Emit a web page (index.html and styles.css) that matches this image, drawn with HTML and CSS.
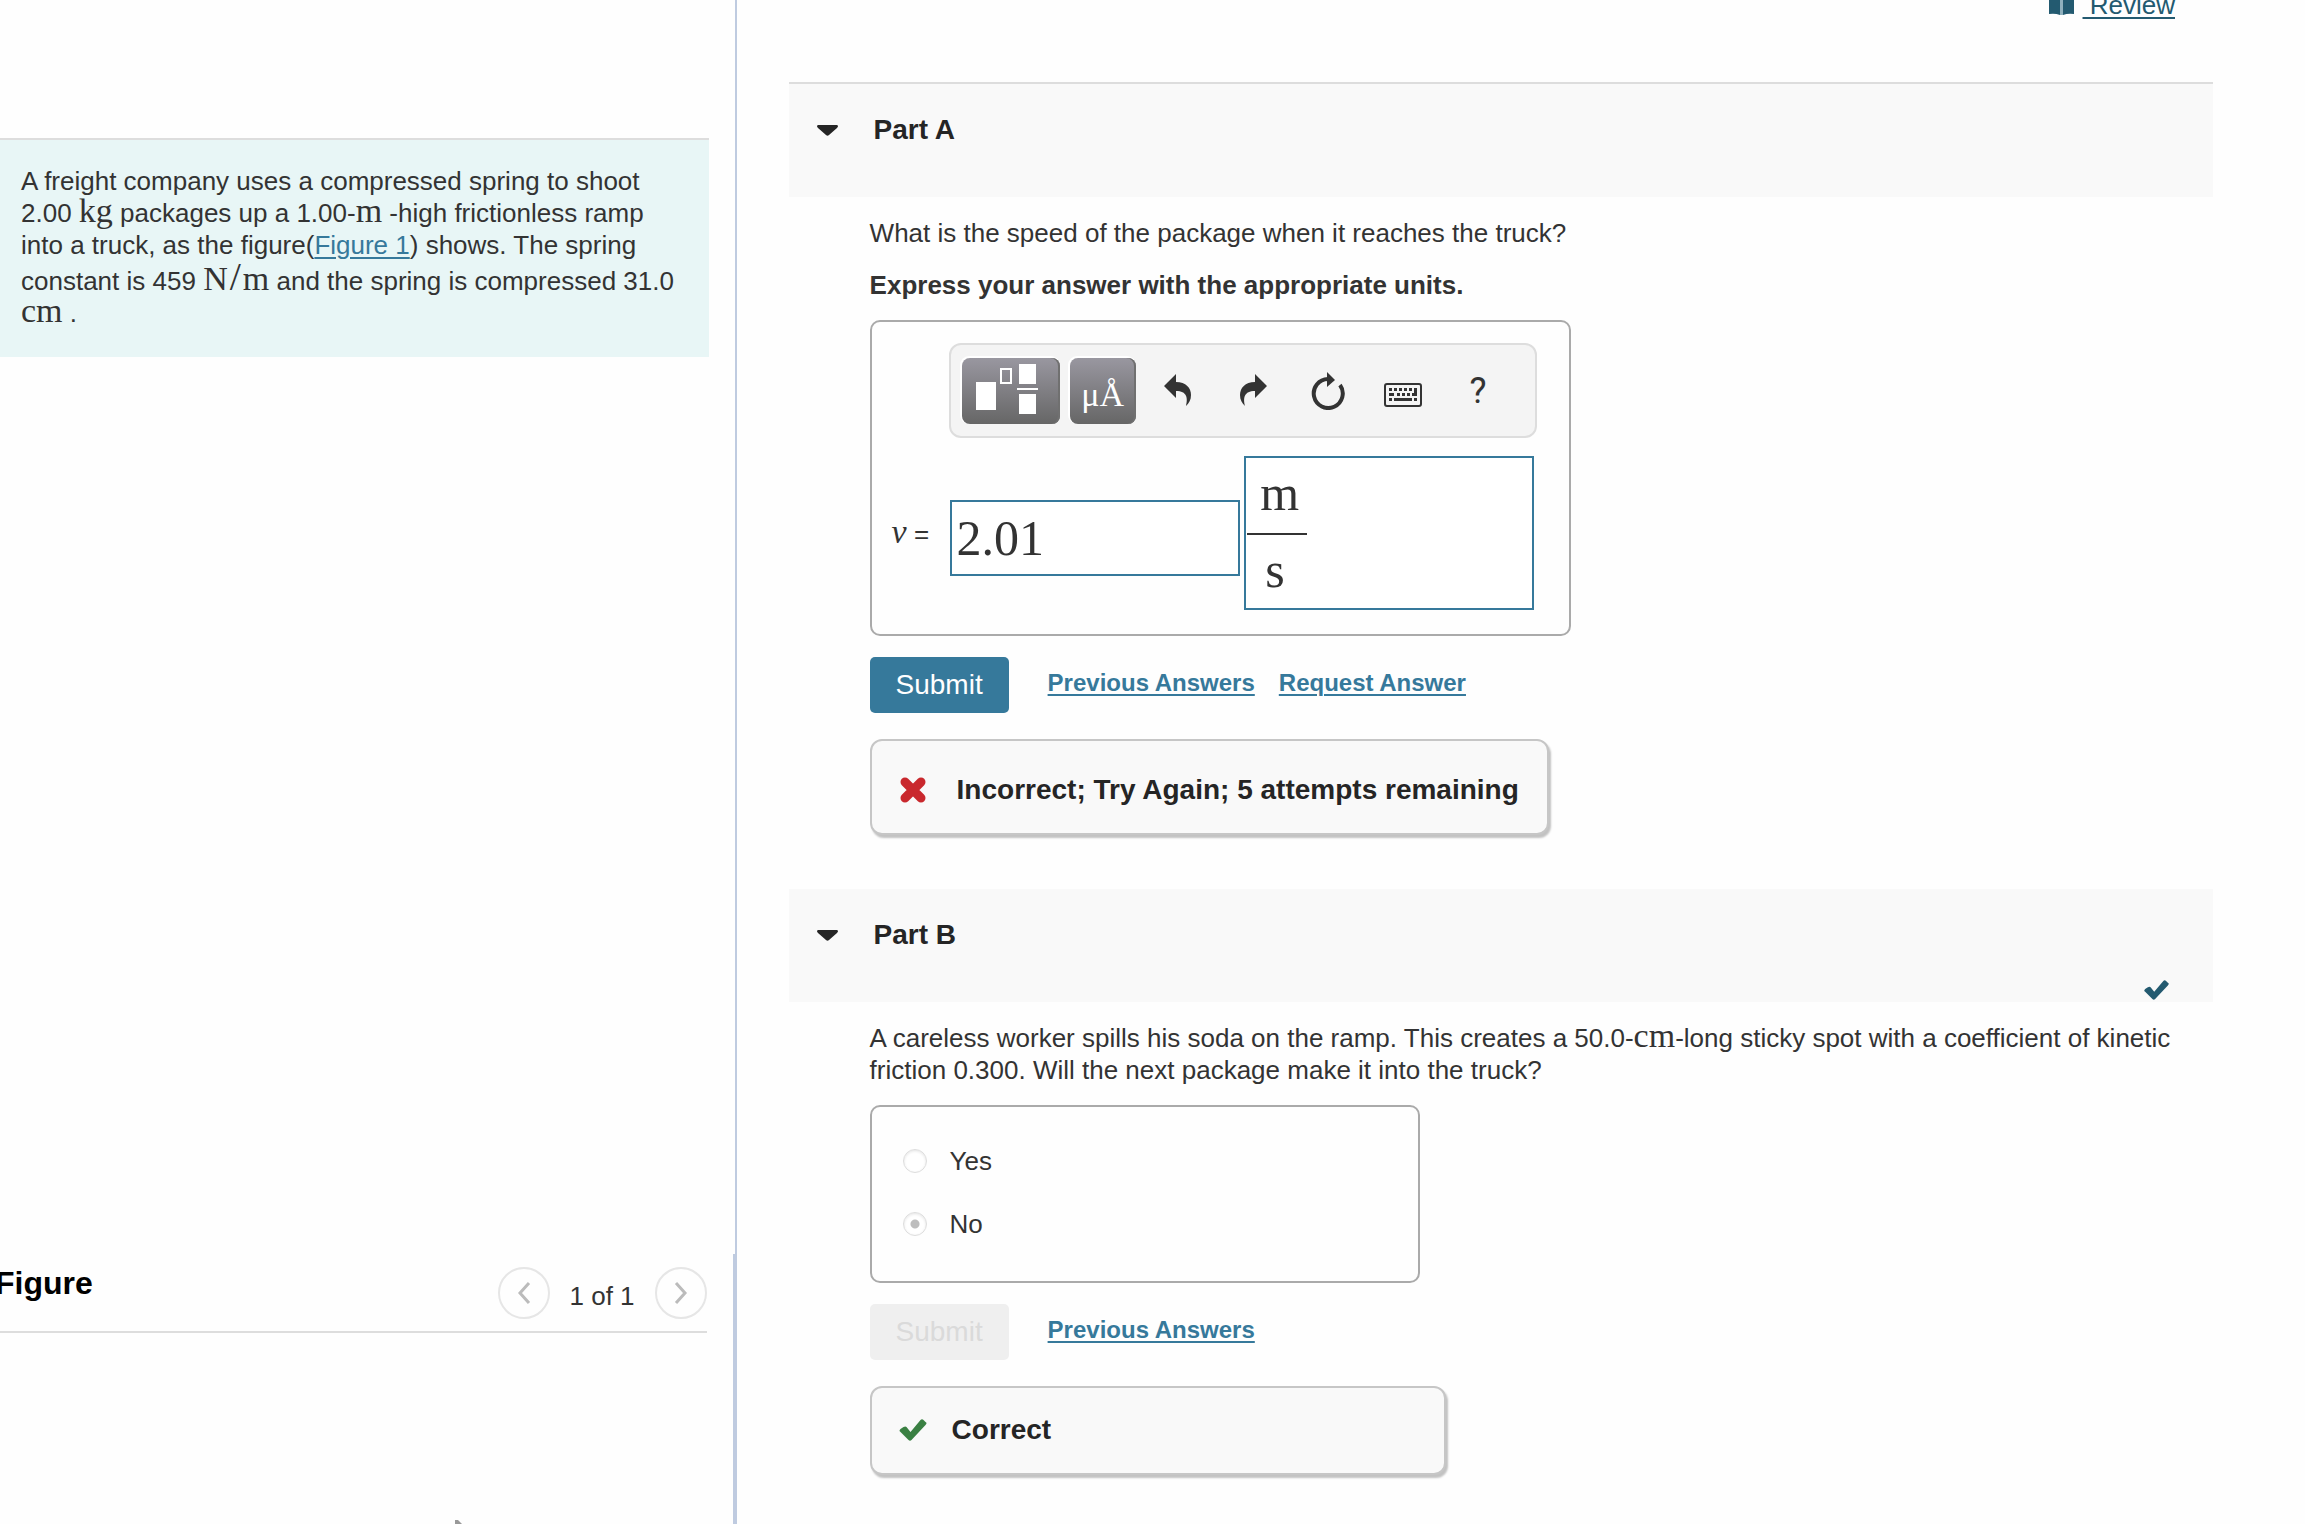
FILE: index.html
```html
<!DOCTYPE html>
<html lang="en">
<head>
<meta charset="utf-8">
<title>Spring and Ramp Problem</title>
<link rel="stylesheet" href="styles.css">
</head>
<body>
<div class="page">
  <aside class="side">
    <section class="side-top">
      <p class="problem">A freight company uses a compressed spring to shoot 2.00 <span class="math">kg</span> packages up a 1.00-<span class="math">m</span> -high frictionless ramp into a truck, as the figure(<a href="#figure">Figure 1</a>) shows. The spring constant is 459 <span class="math">N<span class="slash">/</span>m</span> and the spring is compressed 31.0 <span class="math">cm</span> .</p>
    </section>
    <section class="figure" id="figure">
      <header class="figure-head">
        <h2>Figure</h2>
        <div class="pager">
          <button type="button" class="round" aria-label="Previous figure"><svg width="16" height="24" viewBox="0 0 16 24"><path d="M13 2 4 12l9 10"/></svg></button>
          <span>1 of 1</span>
          <button type="button" class="round" aria-label="Next figure"><svg width="16" height="24" viewBox="0 0 16 24"><path d="M3 2l9 10-9 10"/></svg></button>
        </div>
      </header>
      <svg class="sketch" width="10" height="4" viewBox="0 0 10 4"><path d="M1 0h3l4 4H1z" fill="#999"/></svg>
    </section>
  </aside>

  <main class="work">
    <nav class="top">
      <svg width="25" height="22" viewBox="0 0 25 22"><path d="M0 0h11v22q-5-2-11-1zM14 0h11v21q-6-1-11 1z" fill="#235a70"/><path d="M11 0h3v22h-3z" fill="#8fb0bd"/></svg>
      <a href="#review">&nbsp;Review</a>
    </nav>

    <section class="part">
      <header class="part-head part-head-first">
        <svg width="21" height="11" viewBox="0 0 21 11"><path d="M1 0h19q2 1 0 3l-8 7q-1.500 1.500-3 0L1 3q-2-2 0-3z" fill="#252525"/></svg>
        <h2>Part A</h2>
      </header>
      <div class="part-body">
        <p>What is the speed of the package when it reaches the truck?</p>
        <p class="strong">Express your answer with the appropriate units.</p>
        <div class="answer">
          <div class="toolbar" role="toolbar" aria-label="Equation tools">
            <button type="button" class="tool tool-wide" aria-label="Templates"><svg width="98" height="66" viewBox="0 0 98 66"><g fill="#fff"><path d="M14 24h20v28H14zM57 6h17v20H57zM55 30h21v2H55zM57 36h17v20H57z"/></g><path d="M39 11h10v14H39z" fill="none" stroke="#fff" stroke-width="2"/></svg></button>
            <button type="button" class="tool">μÅ</button>
            <div class="tool-icons">
              <button type="button" aria-label="Undo"><svg width="28" height="33" viewBox="0 0 28 33"><path id="bent" d="M0 12 12 0v8c10 0 15 6 15 13 0 5-2 8-5 11 2-8 1-15-10-15v7z"/></svg></button>
              <button type="button" aria-label="Redo"><svg width="28" height="33" viewBox="0 0 28 33"><use href="#bent" transform="matrix(-1 0 0 1 28 0)"/></svg></button>
              <button type="button" aria-label="Reset"><svg width="34" height="38" viewBox="0 0 34 38"><path d="M17 7A14.500 14.500 0 1 0 29 13" fill="none" stroke="#333" stroke-width="4"/><path d="M16 0l8 8-8 7z"/></svg></button>
              <button type="button" class="low" aria-label="Keyboard"><svg width="38" height="24" viewBox="0 0 38 24"><rect x="1" y="1" width="36" height="22" rx="2" fill="none" stroke="#333" stroke-width="2"/><path d="M5 5h3v3H5zM10 5h3v3h-3zM15 5h3v3h-3zM20 5h3v3h-3zM25 5h3v3h-3zM30 5h3v8h-5v-3h2zM5 10h5v3H5zM13 10h3v3h-3zM18 10h3v3h-3zM23 10h3v3h-3zM5 15h3v3H5zM10 15h18v3H10zM30 15h3v3h-3z"/></svg></button>
              <button type="button" class="help" aria-label="Help">?</button>
            </div>
          </div>
          <div class="entry">
            <label for="value"><i>v</i> =</label>
            <input id="value" class="value" type="text" value="2.01">
            <div class="unit" contenteditable="true" role="textbox" aria-label="Units"><span class="frac"><span class="over">m</span><span class="under">s</span></span></div>
          </div>
        </div>
        <div class="actions">
          <button type="button" class="submit">Submit</button>
          <div class="links"><a href="#previous">Previous Answers</a><a href="#request">Request Answer</a></div>
        </div>
        <div class="feedback wrong">
          <svg width="28" height="28" viewBox="0 0 28 28"><path d="M6 6l16 16M22 6L6 22" stroke="#c9282d" stroke-width="9" stroke-linecap="round"/></svg>
          <span>Incorrect; Try Again; 5 attempts remaining</span>
        </div>
      </div>
    </section>

    <section class="part">
      <header class="part-head">
        <svg width="21" height="11" viewBox="0 0 21 11"><path d="M1 0h19q2 1 0 3l-8 7q-1.500 1.500-3 0L1 3q-2-2 0-3z" fill="#252525"/></svg>
        <h2>Part B</h2>
        <svg class="done" width="25" height="20" viewBox="0 0 27 22"><path d="M0 12q0-1 1-2l3-2q2-1 3 0l4 5L21 1q1.500-1.500 3 0l2 2q2 1 0 3L12 21q-1.500 1.500-3 0L1 13z" fill="#235a70"/></svg>
      </header>
      <div class="part-body">
        <p>A careless worker spills his soda on the ramp. This creates a 50.0-<span class="math">cm</span>-long sticky spot with a coefficient of kinetic friction 0.300. Will the next package make it into the truck?</p>
        <div class="choices">
          <label><input type="radio" name="makes-it" disabled>Yes</label>
          <label><input type="radio" name="makes-it" disabled checked>No</label>
        </div>
        <div class="actions">
          <button type="button" class="submit" disabled>Submit</button>
          <div class="links"><a href="#previous-b">Previous Answers</a></div>
        </div>
        <div class="feedback right">
          <svg width="28" height="22" viewBox="0 0 27 22"><path d="M0 12q0-1 1-2l3-2q2-1 3 0l4 5L21 1q1.500-1.500 3 0l2 2q2 1 0 3L12 21q-1.500 1.500-3 0L1 13z" fill="#3a8043"/></svg>
          <span>Correct</span>
        </div>
      </div>
    </section>
  </main>
</div>
</body>
</html>
```
FILE: styles.css
```css
* { box-sizing: border-box; }

body {
  margin: 0;
  background: #fefefe;
  color: #333;
  font: 26px/32px "Liberation Sans", Arial, sans-serif;
}

h2, p { margin: 0; }
h2 { font-size: 28px; line-height: 32px; color: #252525; }
a { color: #36799b; text-decoration-thickness: 2px; text-underline-offset: 3px; }
button, input { font: inherit; }
button { border: 0; padding: 0; background: none; color: #333; }
svg { display: block; flex: none; }

.page {
  display: grid;
  grid-template-columns: calc(32% - 1px) 1fr;
  min-height: 100vh;
}

.math {
  display: inline-block;
  font-family: "Liberation Serif", serif;
  font-size: 34px;
  line-height: 28px;
}
.slash { margin: 0 2px; font-size: 40px; line-height: 32px; }

/* Left column */
.side { display: flex; flex-direction: column; height: 100vh; overflow: hidden; }
.side-top {
  flex: 1;
  padding: 138px 26px 0 0;
  border-right: 2px solid #bfcbe0;
}
.problem {
  padding: 25px 24px 28px 21px;
  border-top: 2px solid #ddd;
  background: #e8f6f6;
}
.figure {
  display: flex;
  flex-direction: column;
  height: 270px;
  padding-right: 26px;
  border-right: 4px solid #bfcbe0;
}
.figure-head {
  display: flex;
  justify-content: space-between;
  height: 79px;
  padding-top: 13px;
  border-bottom: 2px solid #ddd;
}
.figure-head h2 { margin-left: -5px; font-size: 32px; color: #000; }
.pager { display: flex; gap: 20px; }
.pager span { padding-top: 13px; }
.round {
  display: grid;
  place-items: center;
  width: 52px;
  height: 52px;
  border: 2px solid #e6e6e6;
  border-radius: 50%;
}
.round path { fill: none; stroke: #bbb; stroke-width: 3; }
.sketch { margin: auto 0 0 454px; }

/* Right column */
.work { padding: 0 92px 46px 52px; }
.top {
  display: flex;
  justify-content: flex-end;
  gap: 9px;
  height: 93px;
  margin-top: -11px;
  padding-right: 38px;
}
.top svg { margin-top: 4px; }
.top a { color: #235a70; }

.part-head {
  position: relative;
  display: flex;
  align-items: center;
  gap: 36px;
  padding: 30px 28px 51px;
  background: #f9f9f9;
}
.part-head-first { border-top: 2px solid #ddd; }
.done { position: absolute; right: 44px; bottom: 2px; }
.part-body { padding: 20px 0 54px 81px; }
.strong { margin-top: 20px; font-weight: bold; }

.answer, .choices {
  width: fit-content;
  margin-top: 19px;
  border: 2px solid #aaa;
  border-radius: 10px;
}
.answer { padding: 21px 32px 24px 20px; }
.toolbar {
  display: flex;
  align-items: center;
  width: 588px;
  height: 95px;
  margin-left: 57px;
  padding-left: 11px;
  border: 2px solid #ddd;
  border-radius: 12px;
  background: #f4f4f4;
}
.tool {
  width: 66px;
  height: 66px;
  margin-right: 10px;
  border-radius: 8px;
  background: linear-gradient(#9997a0, #666);
  box-shadow: -1px -1px 0 1px #fff, inset -2px 0 0 #707070;
  color: #fff;
  font: 34px/66px "Liberation Serif", serif;
  padding-top: 4px;
}
.tool-wide { width: 98px; padding-top: 0; }
.tool-icons { display: flex; margin-left: -5px; }
.tool-icons button { display: grid; place-items: center; width: 75px; height: 66px; }
.tool-icons svg { fill: #333; }
.tool-icons .low { padding-top: 8px; }
.tool-icons .help { font: 36px/60px Roboto, sans-serif; }

.entry { display: flex; align-items: center; margin-top: 18px; }
.entry label { width: 58px; }
.entry i { font-family: "Liberation Serif", serif; font-size: 34px; line-height: 32px; }
.value, .unit {
  width: 290px;
  border: 2px solid #36799b;
  background: #fff;
  color: #333;
  font: 50px/56px "Liberation Serif", serif;
}
.value { height: 76px; margin: 10px 4px 0 0; padding: 0 5px; }
.unit { height: 154px; padding: 7px 1px; }
.frac { display: inline-flex; flex-direction: column; width: 60px; text-align: center; }
.over { padding-left: 6px; }
.under { margin-top: 12px; padding: 7px 3px 0 0; border-top: 2px solid #333; }

.actions { display: flex; align-items: center; gap: 39px; margin-top: 21px; }
.submit {
  width: 139px;
  height: 56px;
  border-radius: 5px;
  background: #36799b;
  color: #fff;
  font-size: 28px;
}
.submit:disabled { background: #efefef; color: #dadada; }
.links { display: flex; gap: 24px; padding-bottom: 4px; font-size: 24px; font-weight: bold; line-height: 28px; }

.feedback {
  display: flex;
  align-items: center;
  width: fit-content;
  margin-top: 26px;
  border: 2px solid #c6c6c6;
  border-radius: 12px;
  background: #f9f9f9;
  box-shadow: 2px 3px 2px #c2c2c2;
  color: #252525;
  font-size: 28px;
  font-weight: bold;
}
.wrong { gap: 30px; padding: 33px 28px 27px 27px; }
.right { gap: 25px; min-width: 576px; padding: 26px 28px 27px 27px; }

.choices { display: grid; gap: 31px; width: 550px; padding: 38px 31px 41px; }
.choices label { display: flex; align-items: center; gap: 23px; }
.choices input {
  appearance: none;
  width: 24px;
  height: 24px;
  margin: 0;
  border: 1px solid #ddd;
  border-radius: 50%;
  background: #fff;
  box-shadow: inset 0 1px 3px #e4e4e4;
}
.choices input:checked { background: radial-gradient(circle, #bdbdbd 4px, #fff 5px); }
```
